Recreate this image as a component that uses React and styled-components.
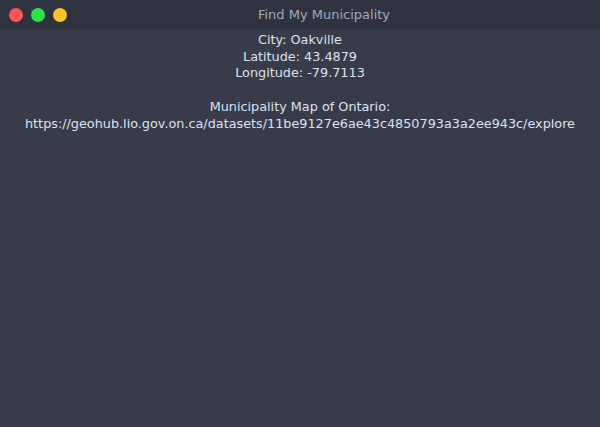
import React from "react";
import styled, { createGlobalStyle } from "styled-components";

const Global = createGlobalStyle`
  html, body { margin: 0; padding: 0; background: #383b4a; }
  body { font-family: "DejaVu Sans", sans-serif; }
`;

const Window = styled.div`
  width: 600px;
  height: 427px;
  background: #383b4a;
  display: flex;
  flex-direction: column;
`;

const TitleBar = styled.div`
  height: 29px;
  background: #2f323f;
  display: flex;
  align-items: center;
  position: relative;
  padding-left: 9px;
  gap: 8px;
`;

const Dot = styled.span`
  width: 14px;
  height: 14px;
  border-radius: 50%;
  background: ${(p) => p.$c};
`;

const Title = styled.div`
  position: absolute;
  left: 48px;
  right: 0;
  top: 7px;
  text-align: center;
  font-size: 13px;
  color: #a3aabb;
  pointer-events: none;
`;

const Content = styled.div`
  display: flex;
  flex-direction: column;
  align-items: center;
  padding-top: 3px;
  font-size: 12.8px;
  line-height: 16.7px;
  color: #dbe2ef;
  text-align: center;
`;

const Line = styled.div`
  white-space: nowrap;
  min-height: 16.7px;
`;

export default function App() {
  return (
    <>
      <Global />
      <Window>
        <TitleBar>
          <Dot $c="#fe5459" />
          <Dot $c="#2fe14a" />
          <Dot $c="#fdc22e" />
          <Title>Find My Municipality</Title>
        </TitleBar>
        <Content>
          <Line>City: Oakville</Line>
          <Line>Latitude: 43.4879</Line>
          <Line>Longitude: -79.7113</Line>
          <Line />
          <Line>Municipality Map of Ontario:</Line>
          <Line>https://geohub.lio.gov.on.ca/datasets/11be9127e6ae43c4850793a3a2ee943c/explore</Line>
        </Content>
      </Window>
    </>
  );
}
